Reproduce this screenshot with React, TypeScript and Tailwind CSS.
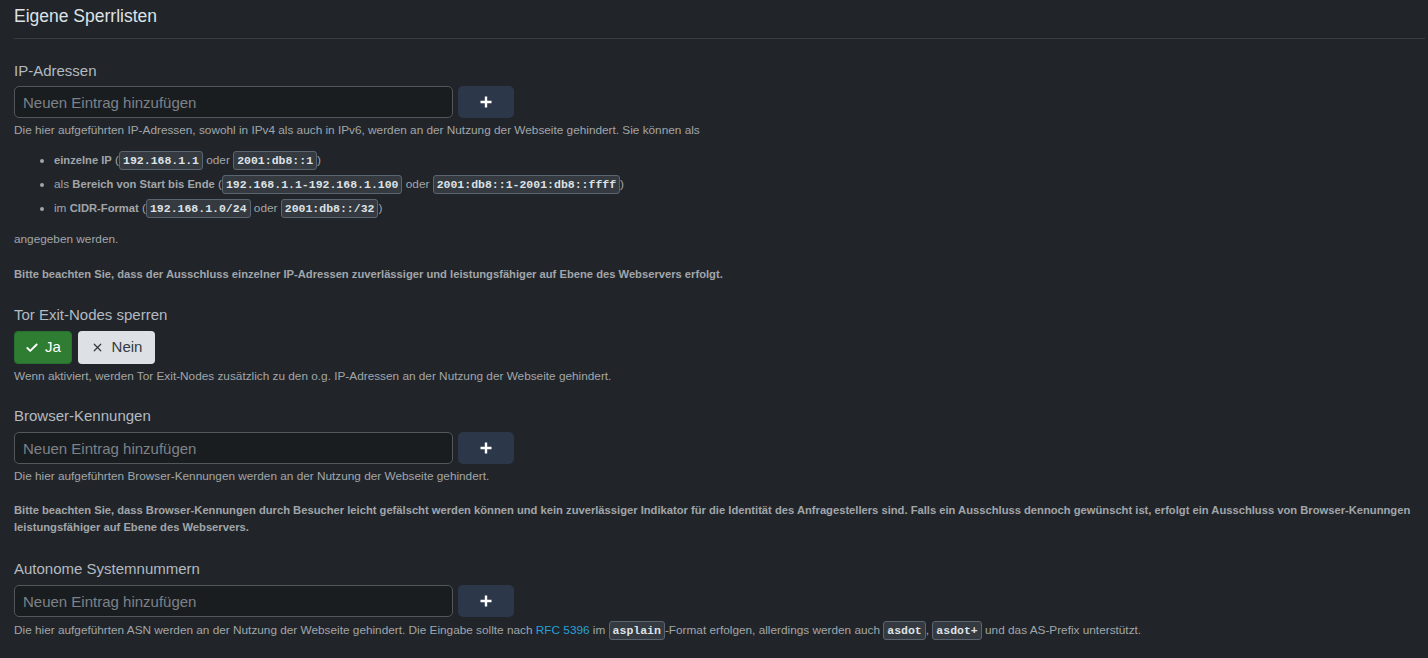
import React from "react";
import { Check, X } from "lucide-react";

const Code = ({ children }: { children: React.ReactNode }) => (
  <code className="inline-block rounded-[3px] border border-[#5a6570] bg-[#343a40] px-[3px] leading-[17px] font-bold text-[#dee2e6] text-[11.5px] [font-family:'Liberation_Mono','DejaVu_Sans_Mono',monospace]">
    {children}
  </code>
);

const AddInput = ({ className = "" }: { className?: string }) => (
  <div className={`flex gap-[5px] ${className}`}>
    <input
      placeholder="Neuen Eintrag hinzufügen"
      className="h-[32px] w-[439px] rounded-[5px] border border-[#52575c] bg-[#1a1d20] px-[8px] text-[15px] text-[#dee2e6] placeholder:text-[#7d8288] outline-none"
    />
    <button className="flex h-[32px] w-[56px] items-center justify-center rounded-[5px] bg-[#2c3749] text-white">
      <svg width="14" height="14" viewBox="0 0 14 14">
        <path d="M7 1.5v11M1.5 7h11" stroke="white" strokeWidth="2.4" strokeLinecap="butt" />
      </svg>
    </button>
  </div>
);

const Label = ({ children, className = "" }: { children: React.ReactNode; className?: string }) => (
  <div className={`text-[15px] leading-[20px] text-[#b3bac1] ${className}`}>{children}</div>
);

const Help = ({ children, className = "" }: { children: React.ReactNode; className?: string }) => (
  <div className={`text-[11.8px] leading-[16px] text-[#a1a5aa] ${className}`}>{children}</div>
);

const Note = ({ children, className = "" }: { children: React.ReactNode; className?: string }) => (
  <div className={`text-[11.2px] font-bold leading-[17px] text-[#a1a5aa] ${className}`}>{children}</div>
);

export default function App() {
  return (
    <div className="min-h-[658px] bg-[#212529] pl-[14px] pr-[3px] [font-family:'Liberation_Sans',Arial,sans-serif]">
      <div className="h-[38px] pt-[4px] text-[17.5px] leading-[24px] text-[#dee2e6]">Eigene Sperrlisten</div>
      <div className="h-px bg-[#3a3e42]" />

      <Label className="mt-[22px]">IP-Adressen</Label>
      <AddInput className="mt-[5px]" />
      <Help className="mt-[4px]">
        Die hier aufgeführten IP-Adressen, sowohl in IPv4 als auch in IPv6, werden an der Nutzung der Webseite gehindert. Sie können als
      </Help>
      <ul className="mt-[10px] list-disc pl-[40px] text-[11.8px] leading-[24px] text-[#a1a5aa] marker:text-[#a1a5aa]">
        <li>
          <span className="font-bold text-[11.2px]">einzelne IP</span> (<Code>192.168.1.1</Code> oder <Code>2001:db8::1</Code>)
        </li>
        <li>
          als <span className="font-bold text-[11.2px]">Bereich von Start bis Ende</span> (<Code>192.168.1.1-192.168.1.100</Code> oder{" "}
          <Code>2001:db8::1-2001:db8::ffff</Code>)
        </li>
        <li>
          im <span className="font-bold text-[11.2px]">CIDR-Format</span> (<Code>192.168.1.0/24</Code> oder <Code>2001:db8::/32</Code>)
        </li>
      </ul>
      <Help className="mt-[11px]">angegeben werden.</Help>
      <Note className="mt-[19px]">
        Bitte beachten Sie, dass der Ausschluss einzelner IP-Adressen zuverlässiger und leistungsfähiger auf Ebene des Webservers erfolgt.
      </Note>

      <Label className="mt-[22px]">Tor Exit-Nodes sperren</Label>
      <div className="mt-[6px] flex gap-[6px]">
        <button className="flex h-[33px] w-[58px] items-center justify-center gap-[6px] rounded-[4px] border border-[#277030] bg-[#2e7d32] text-[15px] text-white">
          <Check size={14} strokeWidth={3.2} />
          <span>Ja</span>
        </button>
        <button className="flex h-[33px] w-[77px] items-center justify-center gap-[8px] rounded-[4px] bg-[#dde1e5] text-[15px] text-[#343a40]">
          <X size={13} strokeWidth={2.2} />
          <span>Nein</span>
        </button>
      </div>
      <Help className="mt-[4px]">
        Wenn aktiviert, werden Tor Exit-Nodes zusätzlich zu den o.g. IP-Adressen an der Nutzung der Webseite gehindert.
      </Help>

      <Label className="mt-[22px]">Browser-Kennungen</Label>
      <AddInput className="mt-[6px]" />
      <Help className="mt-[4px]">Die hier aufgeführten Browser-Kennungen werden an der Nutzung der Webseite gehindert.</Help>
      <Note className="mt-[18px]">
        Bitte beachten Sie, dass Browser-Kennungen durch Besucher leicht gefälscht werden können und kein zuverlässiger Indikator für die Identität des Anfragestellers sind. Falls ein Ausschluss dennoch gewünscht ist, erfolgt ein Ausschluss von Browser-Kenunngen leistungsfähiger auf Ebene des Webservers.
      </Note>

      <Label className="mt-[23px]">Autonome Systemnummern</Label>
      <AddInput className="mt-[6px]" />
      <Help className="mt-[3px] leading-[20px]">
        Die hier aufgeführten ASN werden an der Nutzung der Webseite gehindert. Die Eingabe sollte nach{" "}
        <a className="text-[#2a9fd6]">RFC 5396</a> im <Code>asplain</Code>-Format erfolgen, allerdings werden auch <Code>asdot</Code>,{" "}
        <Code>asdot+</Code> und das AS-Prefix unterstützt.
      </Help>
    </div>
  );
}
